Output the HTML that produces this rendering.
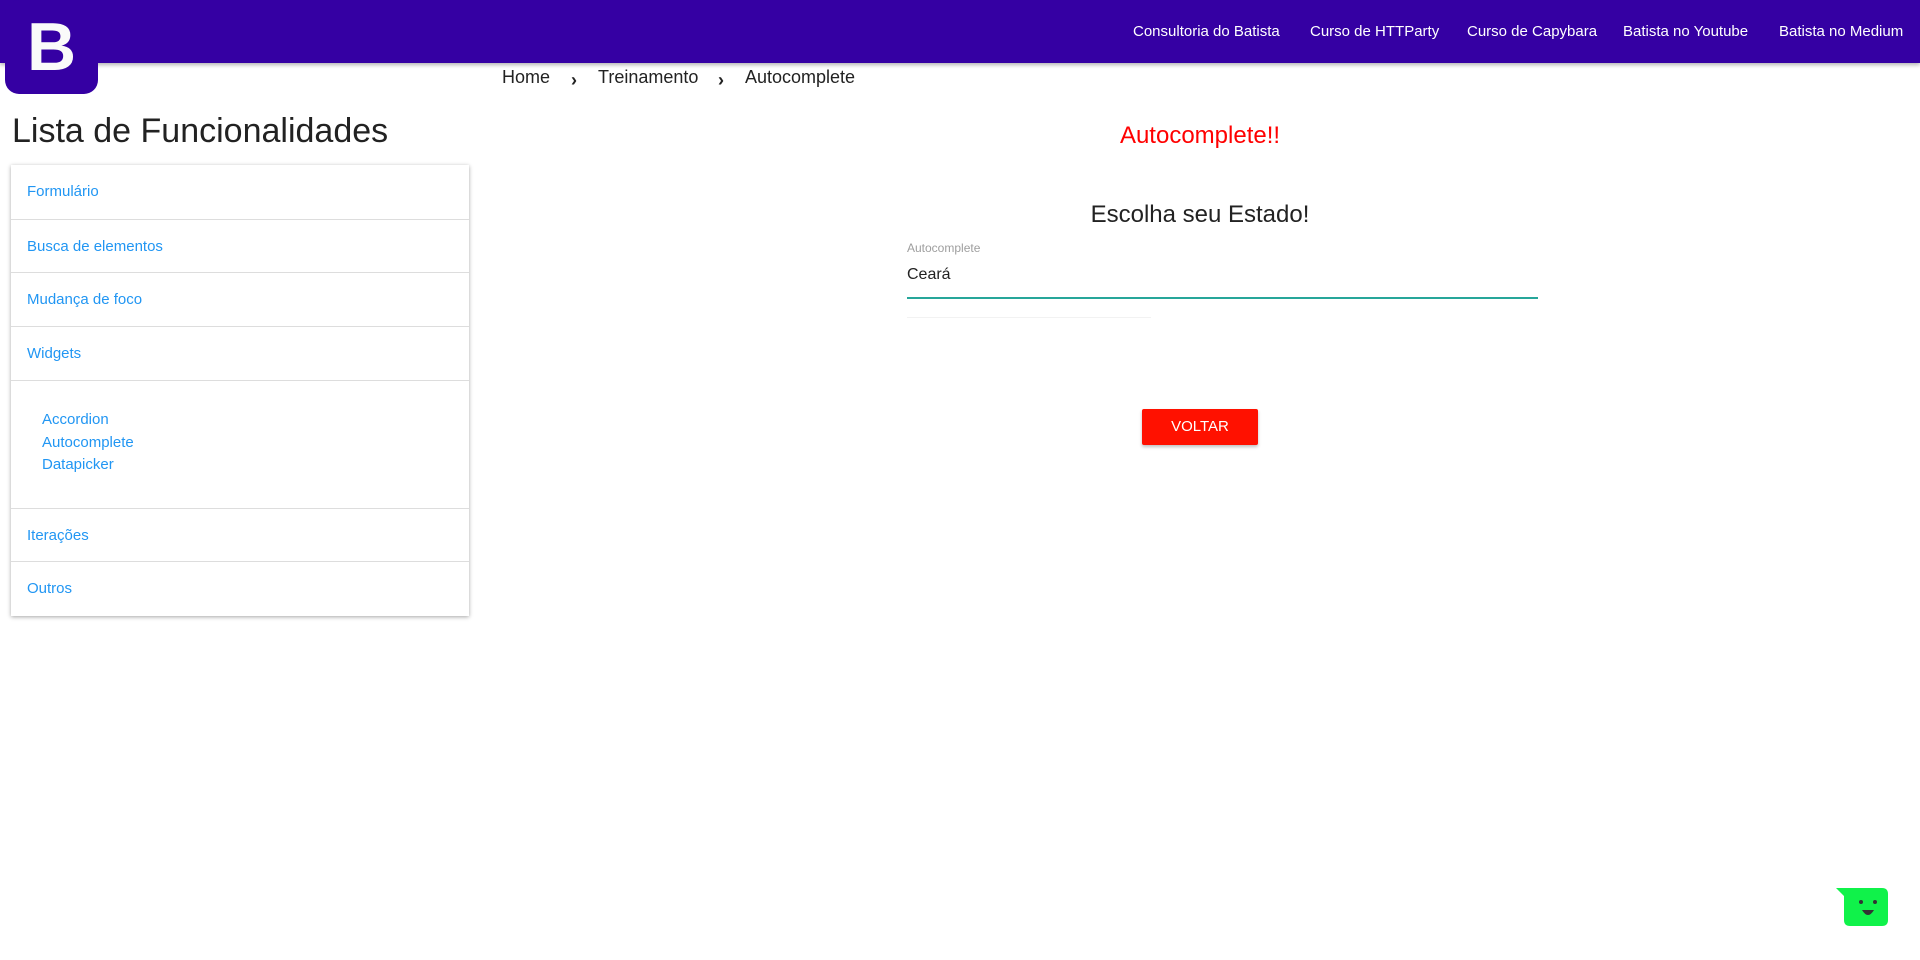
<!DOCTYPE html>
<html><head><meta charset="utf-8"><style>
*{box-sizing:border-box;margin:0;padding:0}
body{width:1920px;height:960px;background:#fff;font-family:"Liberation Sans",sans-serif;position:relative;overflow:hidden;color:#222}
.nav{position:absolute;left:0;top:0;width:1920px;height:63px;background:#3500a3;box-shadow:0 2px 4px rgba(0,0,0,.3)}
.nav a{position:absolute;top:23px;color:#fff;font-size:15px;text-decoration:none;white-space:nowrap}
.logo{position:absolute;left:5px;top:0;width:93px;height:94px;background:#3500a3;border-radius:14px;z-index:2}
.logo span{position:absolute;left:0;top:0;width:93px;height:94px;display:flex;align-items:center;justify-content:center;font-size:68px;font-weight:bold;color:#fafafa}
.bc{position:absolute;top:67px;font-size:18px;color:#222}
.chev{position:absolute;top:70px;font-size:18px;color:#222;font-weight:bold}
h1{position:absolute;left:12px;top:112px;font-size:34px;font-weight:normal;color:#222}
.side{position:absolute;left:11px;top:165px;width:458px;height:451px;box-shadow:0 1px 4px rgba(0,0,0,.35);background:#fff}
.row{position:absolute;left:0;width:458px;border-top:1px solid #ddd;color:#2196f3;font-size:15px;padding-left:16px}
.sub{position:absolute;left:31px;color:#2196f3;font-size:15px}
.c{position:absolute;left:0;width:2400px;text-align:center}
</style></head><body>
<div class="nav">
<a style="left:1133px">Consultoria do Batista</a>
<a style="left:1310px">Curso de HTTParty</a>
<a style="left:1467px">Curso de Capybara</a>
<a style="left:1623px">Batista no Youtube</a>
<a style="left:1779px">Batista no Medium</a>
</div>
<div class="logo"><span>B</span></div>
<div class="bc" style="left:502px">Home</div>
<div class="chev" style="left:571px">›</div>
<div class="bc" style="left:598px">Treinamento</div>
<div class="chev" style="left:718px">›</div>
<div class="bc" style="left:745px">Autocomplete</div>
<h1>Lista de Funcionalidades</h1>
<div class="side">
<div class="row" style="top:0;border-top:none;height:54px;line-height:54px">Formulário</div>
<div class="row" style="top:54px;height:53px;line-height:53px">Busca de elementos</div>
<div class="row" style="top:107px;height:54px;line-height:54px">Mudança de foco</div>
<div class="row" style="top:161px;height:54px;line-height:54px">Widgets</div>
<div class="row" style="top:215px;height:128px"></div>
<div class="sub" style="top:246px">Accordion</div>
<div class="sub" style="top:269px">Autocomplete</div>
<div class="sub" style="top:291px">Datapicker</div>
<div class="row" style="top:343px;height:53px;line-height:53px">Iterações</div>
<div class="row" style="top:396px;height:55px;line-height:53px">Outros</div>
</div>
<div class="c" style="top:122px;color:#f00;font-size:24px">Autocomplete!!</div>
<div class="c" style="top:201px;font-size:24px;color:#222">Escolha seu Estado!</div>
<div style="position:absolute;left:907px;top:241px;font-size:12px;color:#9e9e9e">Autocomplete</div>
<div style="position:absolute;left:907px;top:266px;font-size:16px;color:#222">Ceará</div>
<div style="position:absolute;left:907px;top:297px;width:631px;height:2px;background:#26a69a"></div>
<div style="position:absolute;left:907px;top:317px;width:244px;height:1px;background:#f2f2f2"></div>
<div style="position:absolute;left:1142px;top:409px;width:116px;height:36px;background:#ff1100;color:#fff;font-size:15px;text-align:center;line-height:36px;box-shadow:0 2px 3px rgba(0,0,0,.25);border-radius:2px">VOLTAR</div>
<svg style="position:absolute;left:1834px;top:884px" width="56" height="46" viewBox="0 0 56 46">
<path d="M2 4 L48 4 Q54 4 54 10 L54 36 Q54 42 48 42 L16 42 Q10 42 10 36 L10 12 Z" fill="#10f24a"/>
<circle cx="27" cy="18" r="2" fill="#333"/><circle cx="41" cy="18" r="2" fill="#333"/>
<path d="M28 26 Q34 36 40 26 Z" fill="#333"/>
</svg>
</body></html>
